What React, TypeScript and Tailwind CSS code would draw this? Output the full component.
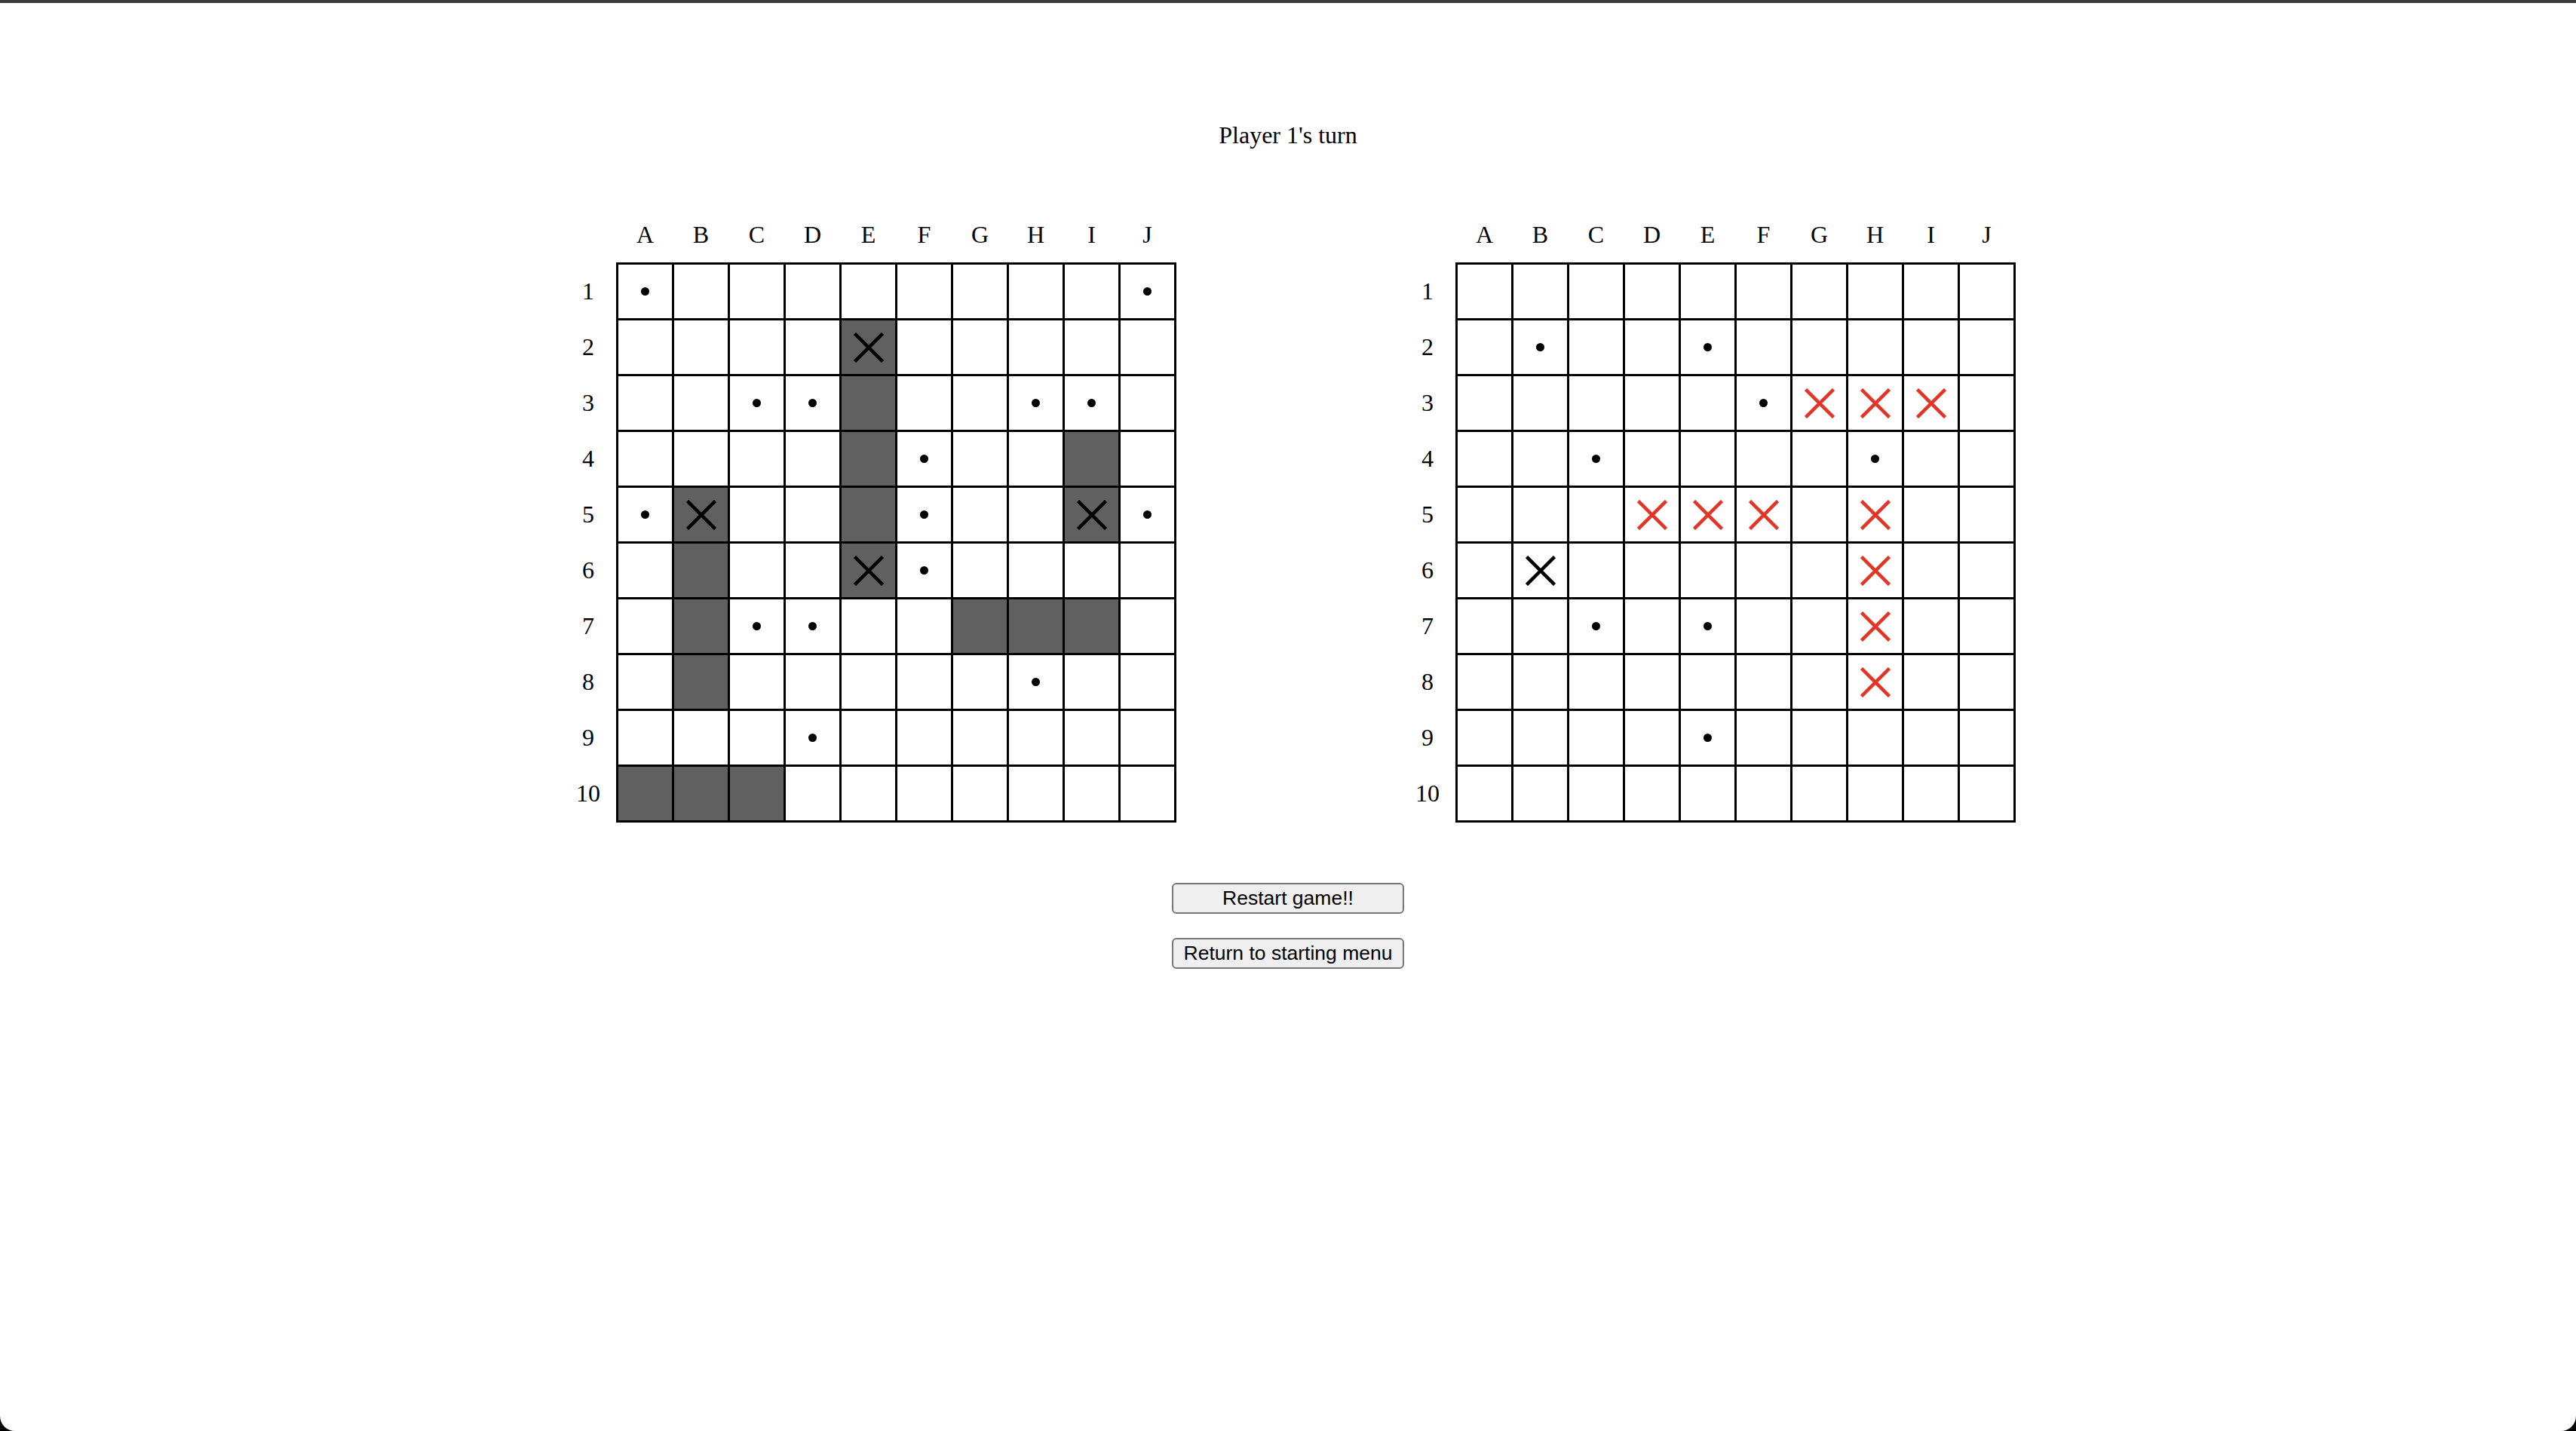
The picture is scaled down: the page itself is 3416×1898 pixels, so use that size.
const COLS = ['A', 'B', 'C', 'D', 'E', 'F', 'G', 'H', 'I', 'J'];

// . empty, S ship, H ship hit, M miss, X hit, R sunk
const ownBoard = [
  'M........M',
  '....H.....',
  '..MMS..MM.',
  '....SM..S.',
  'MH..SM..HM',
  '.S..HM....',
  '.SMM..SSS.',
  '.S.....M..',
  '...M......',
  'SSS.......',
];

const enemyBoard = [
  '..........',
  '.M..M.....',
  '.....MRRR.',
  '..M....M..',
  '...RRR.R..',
  '.X.....R..',
  '..M.M..R..',
  '.......R..',
  '....M.....',
  '..........',
];

function Cross({ color }: { color: string }) {
  return (
    <svg width="40" height="40" viewBox="0 0 40 40">
      <path d="M1.5 1.5L38.5 38.5M38.5 1.5L1.5 38.5" stroke={color} strokeWidth="4.5" />
    </svg>
  );
}

function Cell({ mark }: { mark: string }) {
  const ship = mark === 'S' || mark === 'H';
  return (
    <div className={`w-[71px] h-[71px] flex items-center justify-center ${ship ? 'bg-[#606060]' : 'bg-white'}`}>
      {mark === 'M' && <div className="w-[11px] h-[11px] rounded-full bg-black" />}
      {(mark === 'H' || mark === 'X') && <Cross color="#000" />}
      {mark === 'R' && <Cross color="#e23526" />}
    </div>
  );
}

function Board({ rows }: { rows: string[] }) {
  return (
    <div className="flex flex-col">
      <div className="flex h-[74px] pl-[77px] gap-[3px]">
        {COLS.map(c => (
          <div key={c} className="w-[71px] flex items-center justify-center">{c}</div>
        ))}
      </div>
      <div className="flex">
        <div className="w-[74px] flex flex-col pt-[3px] gap-[3px]">
          {rows.map((_, i) => (
            <div key={i} className="h-[71px] flex items-center justify-center">{i + 1}</div>
          ))}
        </div>
        <div className="grid grid-cols-[repeat(10,71px)] gap-[3px] p-[3px] bg-black">
          {rows.map((row, r) =>
            row.split('').map((m, c) => <Cell key={`${r}-${c}`} mark={m} />)
          )}
        </div>
      </div>
    </div>
  );
}

export default function App() {
  return (
    <div className="min-h-screen bg-black">
      <div className="h-[1898px] bg-white rounded-b-[20px] flex flex-col items-center font-['Liberation_Serif',serif] text-[32px] leading-[37px] text-black">
        <div className="w-full h-[4px] bg-[#3b3b3b]" />
        <p className="mt-[157px]">Player 1's turn</p>
        <div className="mt-[76px] flex gap-[296px]">
          <Board rows={ownBoard} />
          <Board rows={enemyBoard} />
        </div>
        <div className="mt-[80px] flex flex-col gap-[32px] font-['Liberation_Sans',Arial,sans-serif] text-[26.5px] leading-none">
          <button className="w-[308px] h-[41px] bg-[#efefef] border-2 border-[#767676] rounded-[6px]">
            Restart game!!
          </button>
          <button className="w-[308px] h-[41px] bg-[#efefef] border-2 border-[#767676] rounded-[6px]">
            Return to starting menu
          </button>
        </div>
      </div>
    </div>
  );
}
